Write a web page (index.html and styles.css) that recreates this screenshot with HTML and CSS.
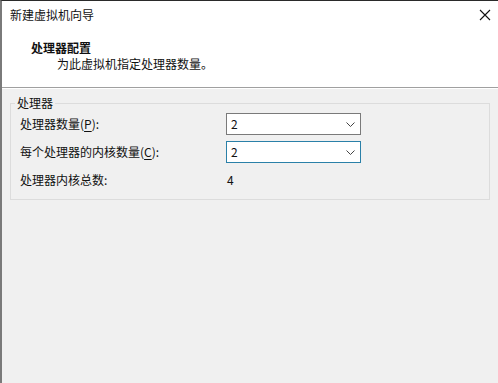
FILE: index.html
```html
<!DOCTYPE html>
<html lang="zh-CN">
<head>
<meta charset="utf-8">
<title>新建虚拟机向导</title>
<link rel="stylesheet" href="styles.css">
</head>
<body>
<div class="window">
  <header class="header">
    <div class="titlebar">
      <span class="title">新建虚拟机向导</span>
      <svg class="close" width="12" height="12" viewBox="0 0 12 12" aria-label="关闭">
        <path d="M1 1 L11 11 M11 1 L1 11" stroke="#111" stroke-width="1.1" fill="none"/>
      </svg>
    </div>
    <div class="heading">处理器配置</div>
    <div class="subtitle">为此虚拟机指定处理器数量。</div>
  </header>
  <main class="content">
    <fieldset class="group">
      <legend class="legend">处理器</legend>
      <div class="rows">
        <label class="label">处理器数量(<u>P</u>):</label>
        <div class="combo"><span class="value">2</span>
          <svg class="chev" width="9" height="5" viewBox="0 0 9 5"><path d="M0.5 0.5 L4.5 4.5 L8.5 0.5" stroke="#444" stroke-width="1" fill="none"/></svg>
        </div>
        <label class="label">每个处理器的内核数量(<u>C</u>):</label>
        <div class="combo focused"><span class="value">2</span>
          <svg class="chev" width="9" height="5" viewBox="0 0 9 5"><path d="M0.5 0.5 L4.5 4.5 L8.5 0.5" stroke="#444" stroke-width="1" fill="none"/></svg>
        </div>
        <span class="label">处理器内核总数:</span>
        <span class="total">4</span>
      </div>
    </fieldset>
  </main>
</div>
</body>
</html>
```

FILE: styles.css
```css
html, body {
  margin: 0;
  padding: 0;
  background: #f0f0f0;
}
body {
  font-family: "Noto Sans CJK SC", "Noto Sans", sans-serif;
  font-size: 12px;
  color: #111;
}
.window {
  width: 498px;
  height: 383px;
  box-sizing: border-box;
  border-top: 1px solid #2a2a2a;
  border-left: 2px solid #7a7a7a;
  background: #f0f0f0;
  display: flex;
  flex-direction: column;
}
.header {
  background: #fff;
  height: 86px;
  border-bottom: 1px solid #a0a0a0;
  box-shadow: 0 1px 0 #ffffff;
  display: flex;
  flex-direction: column;
}
.titlebar {
  height: 28px;
  display: flex;
  align-items: center;
  justify-content: space-between;
  padding: 0 7px 0 8px;
}
.title {
  line-height: 28px;
}
.close {
  display: block;
}
.heading {
  font-weight: bold;
  line-height: 17px;
  margin-top: 10px;
  padding-left: 29px;
}
.subtitle {
  line-height: 16px;
  padding-left: 55px;
}
.content {
  flex: 1;
  padding-top: 7px;
}
.group {
  margin: 0 8px;
  padding: 0 0 8px 0;
  border: 1px solid #dcdcdc;
  min-width: 0;
}
.legend {
  margin-left: 4px;
  padding: 0 2px;
  line-height: 16px;
}
.rows {
  display: grid;
  grid-template-columns: 206px 135px;
  grid-auto-rows: 22px;
  row-gap: 6px;
  align-items: center;
  padding: 2px 0 0 9px;
}
.label {
  line-height: 16px;
}
.label u {
  text-decoration: underline;
  text-underline-offset: 2px;
}
.combo {
  height: 22px;
  box-sizing: border-box;
  background: #fff;
  border: 1px solid #7a7a7a;
  display: flex;
  align-items: center;
  justify-content: space-between;
  padding: 0 5px 0 4px;
}
.combo.focused {
  border-color: #2a80a8;
}
.value {
  line-height: 16px;
}
.chev {
  display: block;
}
.total {
  padding-left: 1px;
  line-height: 16px;
}
```
